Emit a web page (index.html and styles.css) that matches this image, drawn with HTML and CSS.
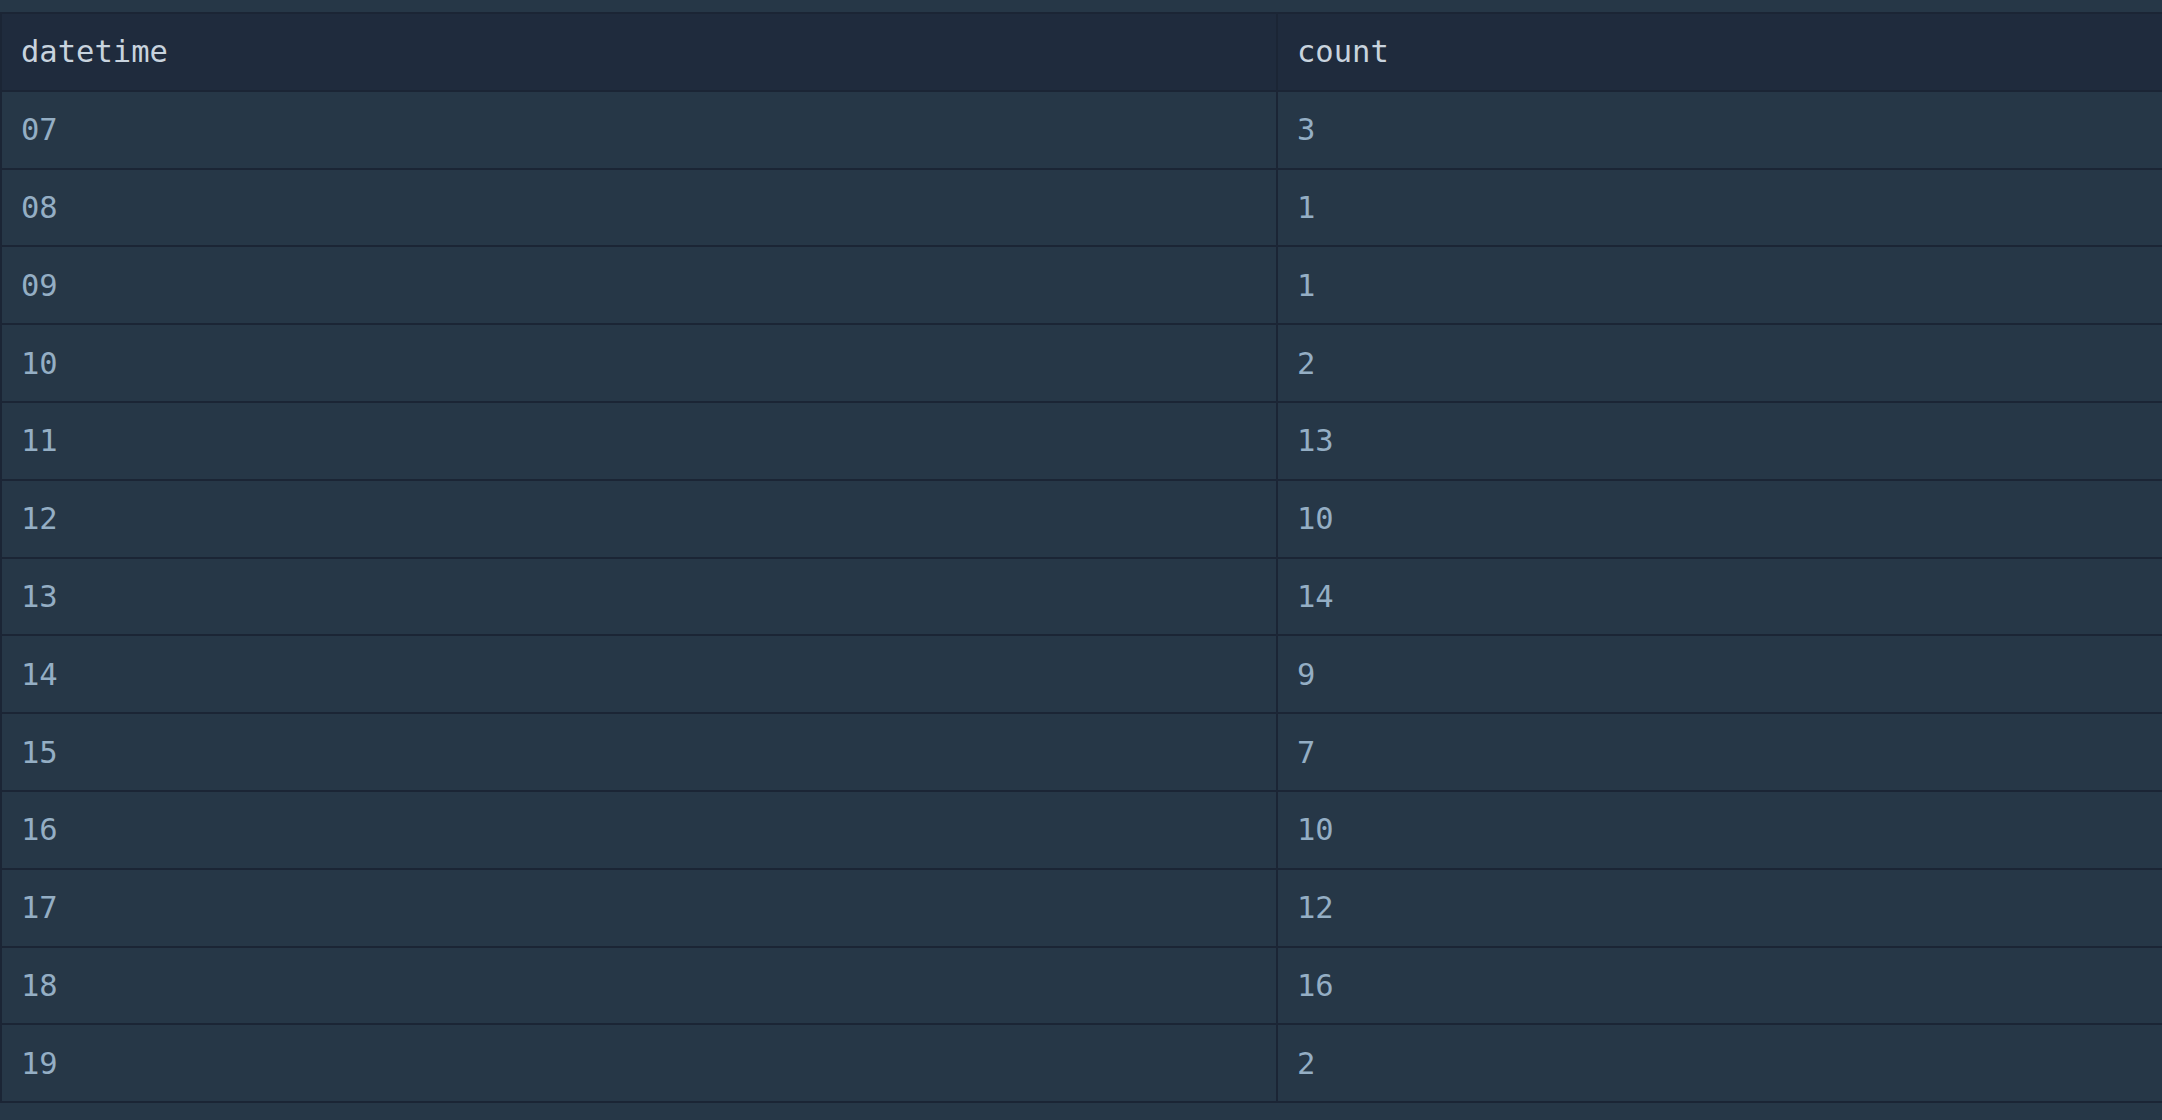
FILE: index.html
```html
<!DOCTYPE html>
<html>
<head>
<meta charset="utf-8">
<link rel="stylesheet" href="styles.css">
</head>
<body>
<div class="wrap">
<table class="grid">
<colgroup><col class="col-a"><col class="col-b"></colgroup>
<thead>
<tr><th class="first">datetime</th><th>count</th></tr>
</thead>
<tbody>
<tr><td class="first">07</td><td>3</td></tr>
<tr><td class="first">08</td><td>1</td></tr>
<tr><td class="first">09</td><td>1</td></tr>
<tr><td class="first">10</td><td>2</td></tr>
<tr><td class="first">11</td><td>13</td></tr>
<tr><td class="first">12</td><td>10</td></tr>
<tr><td class="first">13</td><td>14</td></tr>
<tr><td class="first">14</td><td>9</td></tr>
<tr><td class="first">15</td><td>7</td></tr>
<tr><td class="first">16</td><td>10</td></tr>
<tr><td class="first">17</td><td>12</td></tr>
<tr><td class="first">18</td><td>16</td></tr>
<tr><td class="first">19</td><td>2</td></tr>
</tbody>
</table>
</div>
</body>
</html>
```
FILE: styles.css
```css
html, body {
  margin: 0;
  padding: 0;
  background: #263747;
  overflow: hidden;
}
.wrap {
  padding-top: 12px;
  width: 2162px;
  overflow: hidden;
}
.grid {
  border-collapse: separate;
  border-spacing: 0;
  table-layout: fixed;
  width: 2200px;
  border-top: 2px solid #1b2535;
  border-left: 2px solid #1b2535;
  font-family: "DejaVu Sans Mono", monospace;
  font-size: 30.5px;
}
.col-a { width: 1276px; }
.grid th, .grid td {
  height: 75.8px;
  padding: 0 0 0 19px;
  border-bottom: 2px solid #1b2535;
  text-align: left;
  vertical-align: middle;
  font-weight: normal;
  box-sizing: content-box;
}
.grid th {
  background: #1f2b3d;
  color: #c8d3de;
}
.grid td {
  color: #94aec4;
}
.grid .first {
  border-right: 2px solid #1b2535;
}
```
